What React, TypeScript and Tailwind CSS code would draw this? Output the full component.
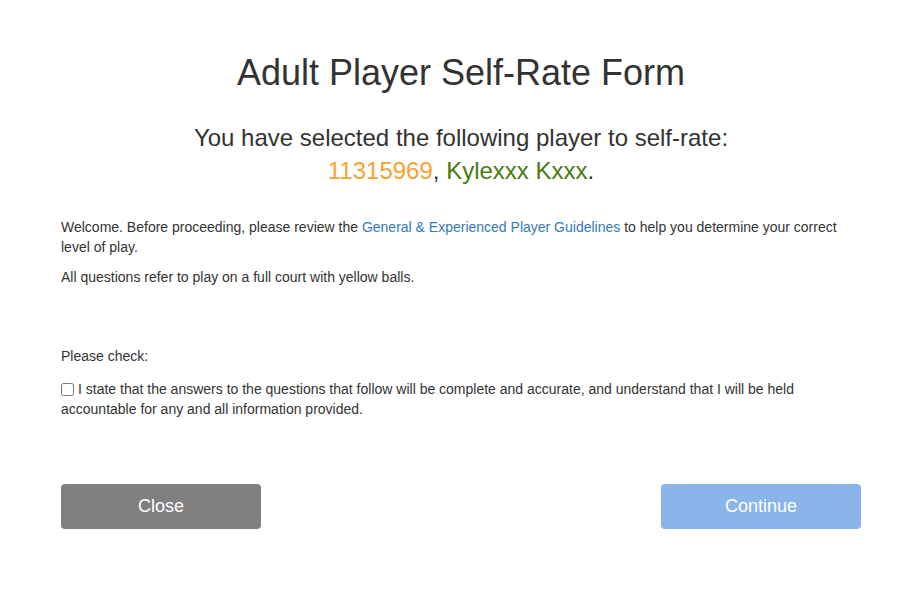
import { useState } from 'react';

export default function App() {
  const [agreed, setAgreed] = useState(false);

  return (
    <div className="min-h-screen bg-white text-[#333] font-['Liberation_Sans',Arial,sans-serif]">
      <div className="w-[800px] ml-[61px] pt-[50px]">
        <h1 className="text-center text-[36px] leading-[46px] font-normal">Adult Player Self-Rate Form</h1>

        <div className="mt-[25px] text-center text-[24px] leading-[33px]">
          <div>You have selected the following player to self-rate:</div>
          <div>
            <span className="text-[#f7a331]">11315969</span>, <span className="text-[#4a7a10]">Kylexxx Kxxx</span>.
          </div>
        </div>

        <div className="mt-[30px] text-[14px] leading-[20px]">
          <p>
            Welcome. Before proceeding, please review the{' '}
            <a href="#" className="text-[#337ab7]">General &amp; Experienced Player Guidelines</a> to help you
            determine your correct level of play.
          </p>
          <p className="mt-[10px]">All questions refer to play on a full court with yellow balls.</p>

          <p className="mt-[59px]">Please check:</p>
          <label className="mt-[13px] block">
            <input
              type="checkbox"
              checked={agreed}
              onChange={(e) => setAgreed(e.target.checked)}
              className="w-[13px] h-[13px] align-[-2px] mr-[4px] m-0"
            />
            I state that the answers to the questions that follow will be complete and accurate, and understand that
            I will be held accountable for any and all information provided.
          </label>
        </div>

        <div className="mt-[65px] flex justify-between">
          <button className="w-[200px] h-[45px] rounded-[4px] bg-[#808080] text-white text-[18px]">Close</button>
          <button
            disabled={!agreed}
            className={`w-[200px] h-[45px] rounded-[4px] text-white text-[18px] ${agreed ? 'bg-[#337ab7]' : 'bg-[#8ab5eb]'}`}
          >
            Continue
          </button>
        </div>
      </div>
    </div>
  );
}
